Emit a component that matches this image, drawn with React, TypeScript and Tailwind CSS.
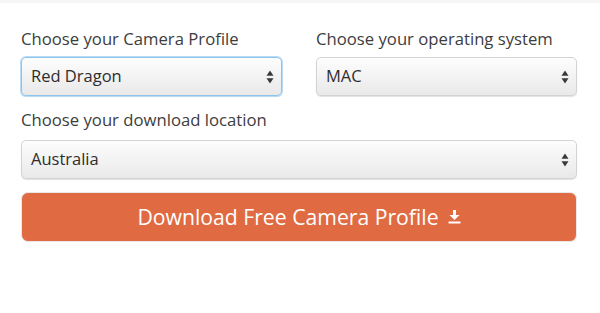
import React from 'react';

// Fake mac-style select box (gradient + up/down arrows)
function SelectBox({ value, focused = false }: { value: string; focused?: boolean }) {
  return (
    <div
      className={`flex h-[39px] items-center justify-between rounded-[5px] border bg-gradient-to-b from-[#fdfdfd] to-[#e9e9e9] pl-[9px] pr-[7px] text-[16.5px] text-[#2e2e2e] shadow-[0_1px_1px_rgba(0,0,0,0.12)] ${
        focused ? 'border-[#8ec3ea] ring-1 ring-[#b9dbf5]' : 'border-[#d3d3d3]'
      }`}
    >
      <span>{value}</span>
      <svg width="8" height="14" viewBox="0 0 8 14" className="text-[#3a3a3a]">
        <path d="M4 0.5 L7.5 5.8 L0.5 5.8 Z" fill="currentColor" />
        <path d="M4 13.5 L7.5 8.2 L0.5 8.2 Z" fill="currentColor" />
      </svg>
    </div>
  );
}

export default function App() {
  return (
    <div
      className="h-[313px] w-[600px] bg-white"
      style={{ fontFamily: '"Open Sans", "Liberation Sans", sans-serif' }}
    >
      <div className="h-[3px] bg-[#f6f6f6]" />
      <div className="pl-[21px] pr-[23px] pt-[25px]">
        {/* Camera profile + OS */}
        <div className="grid grid-cols-2 gap-x-[34px]">
          <div>
            <label className="block text-[16.7px] leading-[22px] text-[#3d3d3d]">Choose your Camera Profile</label>
            <div className="mt-[7px]">
              <SelectBox value="Red Dragon" focused />
            </div>
          </div>
          <div>
            <label className="block text-[16.7px] leading-[22px] text-[#3d3d3d]">Choose your operating system</label>
            <div className="mt-[7px]">
              <SelectBox value="MAC" />
            </div>
          </div>
        </div>

        {/* Download location */}
        <div className="mt-[13px]">
          <label className="block text-[16.7px] leading-[22px] text-[#3d3d3d]">Choose your download location</label>
          <div className="mt-[9px]">
            <SelectBox value="Australia" />
          </div>
        </div>

        {/* Button */}
        <button className="mt-[13px] flex h-[50px] w-full items-center justify-center gap-[9px] rounded-[7px] border border-[#e8e8e8] bg-[#e06b42] text-[21.2px] text-white">
          <span>Download Free Camera Profile</span>
          <svg width="13" height="14" viewBox="0 0 13 14">
            <path d="M5 0 H8 V5 H11.5 L6.5 10 L1.5 5 H5 Z" fill="white" />
            <rect x="0.5" y="11.5" width="12" height="2" fill="white" />
          </svg>
        </button>
      </div>
    </div>
  );
}
